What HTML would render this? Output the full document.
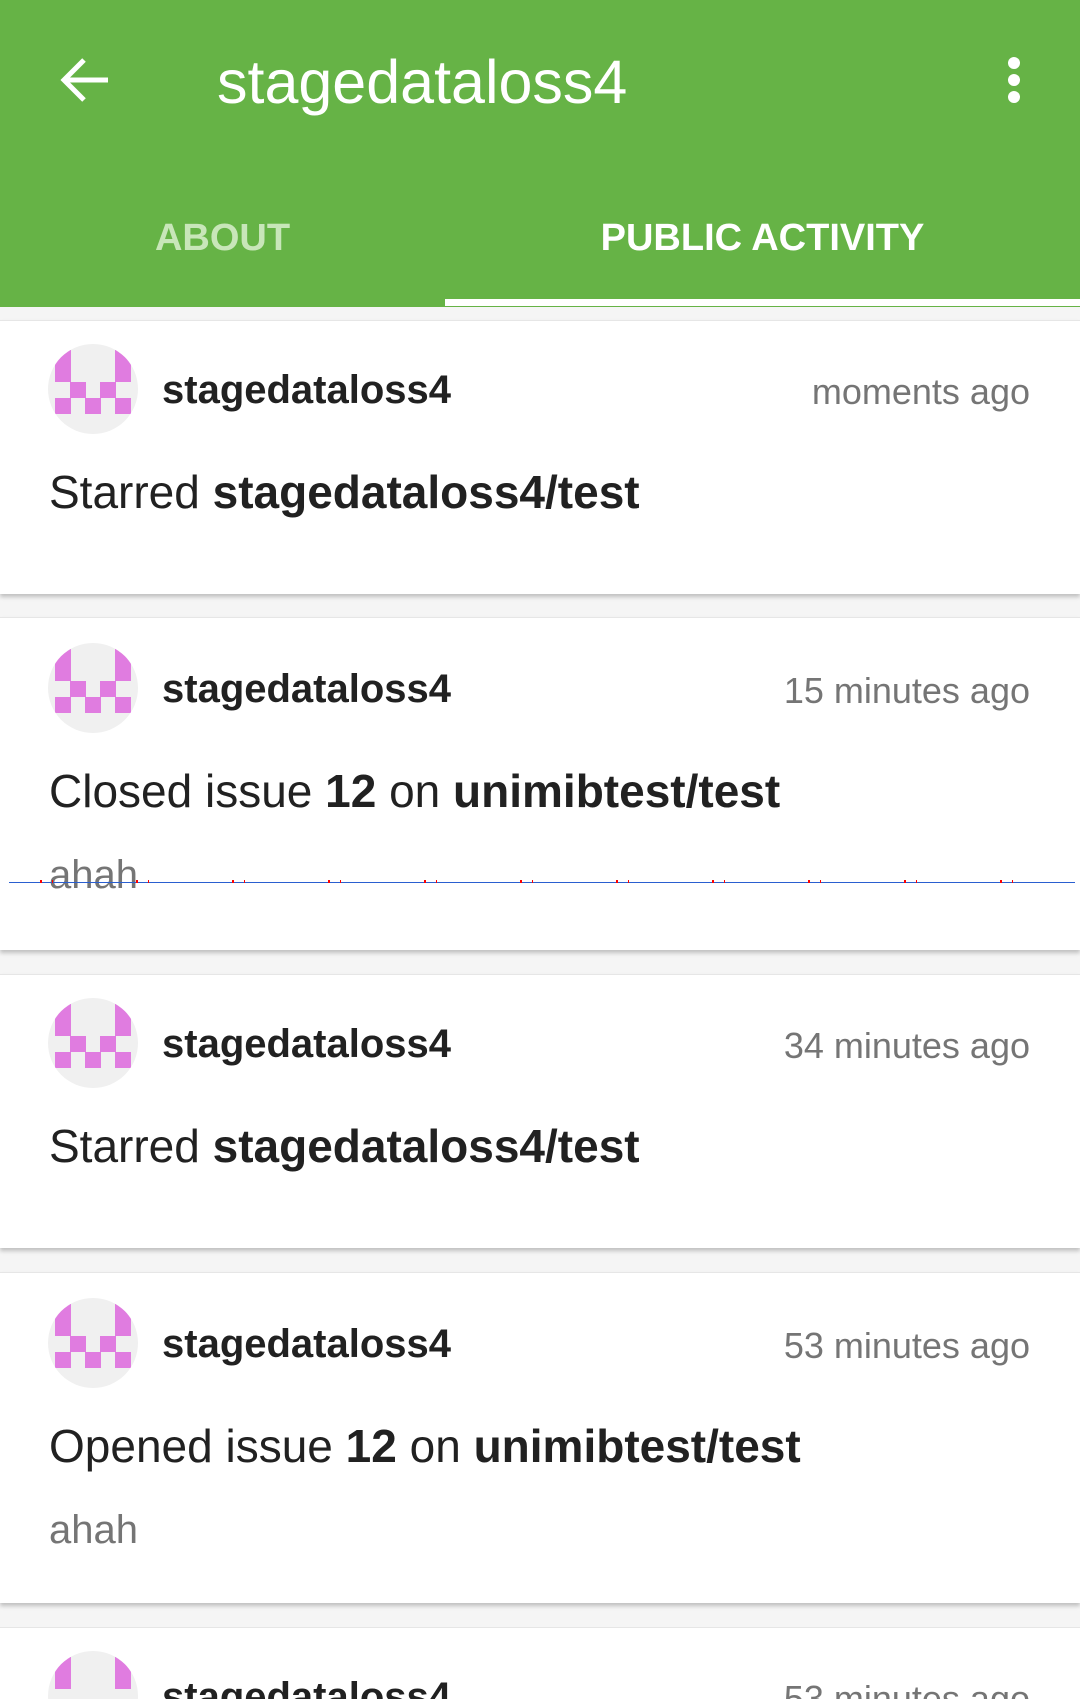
<!DOCTYPE html>
<html style="width:1080px;height:1699px;overflow:hidden"><head><meta charset="utf-8"><style>
*{margin:0;padding:0;box-sizing:border-box}
body{width:1080px;height:1699px;overflow:hidden;background:#f5f5f5;font-family:"Liberation Sans",sans-serif;position:relative}
.bar{position:absolute;left:0;top:0;width:1080px;height:307px;background:#66b346}
.abs{position:absolute;line-height:1;white-space:nowrap}
.card{position:absolute;left:0;width:1080px;background:#fff;border-top:1px solid #e6e6e6;box-shadow:0 3px 4px rgba(0,0,0,0.22);overflow:hidden}
.av{position:absolute;left:48px;width:90px;height:90px;border-radius:50%;background:#f0f0f0;overflow:hidden}
.av i{position:absolute;width:16px;height:16px;background:#e07ce0}
.user{position:absolute;left:162px;font-size:40px;font-weight:bold;color:#212121;line-height:1}
.time{position:absolute;right:50px;font-size:36px;color:#757575;line-height:1}
.body{position:absolute;left:49px;font-size:46px;color:#212121;line-height:1;white-space:nowrap}
.sub{position:absolute;left:49px;font-size:40px;color:#757575;line-height:1}
</style></head><body>
<div class="bar"></div>
<svg class="abs" style="left:58px;top:56px" width="52" height="48" viewBox="0 0 52 48"><path d="M50 24H6M26 4L6 24l20 20" stroke="#fff" stroke-width="5" fill="none"/></svg>
<div class="abs" style="left:217px;top:52px;font-size:61px;color:#fff">stagedataloss4</div>
<svg class="abs" style="left:1004px;top:56px" width="20" height="50"><circle cx="10" cy="7" r="6" fill="#fff"/><circle cx="10" cy="24" r="6" fill="#fff"/><circle cx="10" cy="41" r="6" fill="#fff"/></svg>
<div class="abs" style="left:0;width:445px;text-align:center;top:219px;font-size:38px;font-weight:bold;color:#c8e6b9">ABOUT</div>
<div class="abs" style="left:445px;width:635px;text-align:center;top:219px;font-size:38px;font-weight:bold;color:#fff">PUBLIC ACTIVITY</div>
<div class="abs" style="left:445px;top:299px;width:635px;height:7px;background:#fff"></div>

<div class="card" style="top:320px;height:274px">
<div class="av" style="top:23px"><i style="left:7px;top:6px;height:32px"></i><i style="left:67px;top:6px;height:32px"></i><i style="left:22px;top:38px"></i><i style="left:52px;top:38px"></i><i style="left:7px;top:54px"></i><i style="left:37px;top:54px"></i><i style="left:67px;top:54px"></i></div>
<div class="user" style="top:49px">stagedataloss4</div>
<div class="time" style="top:53px">moments ago</div>
<div class="body" style="top:148px">Starred <b>stagedataloss4/test</b></div>
</div>

<div class="card" style="top:617px;height:333px">
<div class="av" style="top:25px"><i style="left:7px;top:6px;height:32px"></i><i style="left:67px;top:6px;height:32px"></i><i style="left:22px;top:38px"></i><i style="left:52px;top:38px"></i><i style="left:7px;top:54px"></i><i style="left:37px;top:54px"></i><i style="left:67px;top:54px"></i></div>
<div class="user" style="top:51px">stagedataloss4</div>
<div class="time" style="top:55px">15 minutes ago</div>
<div class="body" style="top:150px">Closed issue <b>12</b> on <b>unimibtest/test</b></div>
<div class="sub" style="top:237px">ahah</div>
</div>
<div class="abs" style="left:9px;top:882px;width:1066px;height:1px;background:#2a5fd0"></div>
<div class="abs" style="top:880px;left:0;width:1080px;height:3px;background:repeating-linear-gradient(90deg,transparent 0 40px,#f00 40px 42px,transparent 42px 52px,#f00 52px 53px,transparent 53px 96px)"></div>

<div class="card" style="top:974px;height:274px">
<div class="av" style="top:23px"><i style="left:7px;top:6px;height:32px"></i><i style="left:67px;top:6px;height:32px"></i><i style="left:22px;top:38px"></i><i style="left:52px;top:38px"></i><i style="left:7px;top:54px"></i><i style="left:37px;top:54px"></i><i style="left:67px;top:54px"></i></div>
<div class="user" style="top:49px">stagedataloss4</div>
<div class="time" style="top:53px">34 minutes ago</div>
<div class="body" style="top:148px">Starred <b>stagedataloss4/test</b></div>
</div>

<div class="card" style="top:1272px;height:331px">
<div class="av" style="top:25px"><i style="left:7px;top:6px;height:32px"></i><i style="left:67px;top:6px;height:32px"></i><i style="left:22px;top:38px"></i><i style="left:52px;top:38px"></i><i style="left:7px;top:54px"></i><i style="left:37px;top:54px"></i><i style="left:67px;top:54px"></i></div>
<div class="user" style="top:51px">stagedataloss4</div>
<div class="time" style="top:55px">53 minutes ago</div>
<div class="body" style="top:150px">Opened issue <b>12</b> on <b>unimibtest/test</b></div>
<div class="sub" style="top:237px">ahah</div>
</div>

<div class="card" style="top:1627px;height:72px;box-shadow:none">
<div class="av" style="top:23px"><i style="left:7px;top:6px;height:32px"></i><i style="left:67px;top:6px;height:32px"></i></div>
<div class="user" style="top:49px">stagedataloss4</div>
<div class="time" style="top:53px">53 minutes ago</div>
</div>
</body></html>
